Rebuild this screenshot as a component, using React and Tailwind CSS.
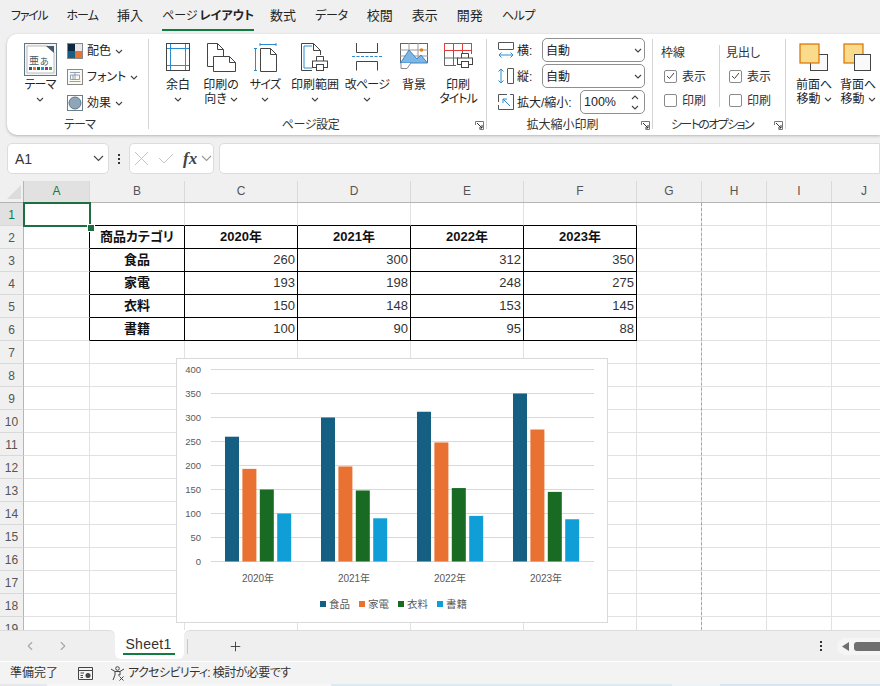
import { ChevronLeft, ChevronRight, Plus } from "lucide-react";

const menus = [
  { label: "ファイル", cls: "text-[12px] tracking-[-1.3px]" },
  { label: "ホーム", cls: "text-[12px] tracking-[-0.9px]" },
  { label: "挿入", cls: "" },
  { label: "ページレイアウト", cls: "" },
  { label: "数式", cls: "" },
  { label: "データ", cls: "text-[12px] tracking-[-0.3px]" },
  { label: "校閲", cls: "" },
  { label: "表示", cls: "" },
  { label: "開発", cls: "" },
  { label: "ヘルプ", cls: "text-[12px] tracking-[-0.3px]" },
];
const columns = [
  { name: "A", w: "w-[66px]" },
  { name: "B", w: "w-[95px]" },
  { name: "C", w: "w-[113px]" },
  { name: "D", w: "w-[113px]" },
  { name: "E", w: "w-[113px]" },
  { name: "F", w: "w-[113px]" },
  { name: "G", w: "w-[65px]" },
  { name: "H", w: "w-[65px]" },
  { name: "I", w: "w-[65px]" },
  { name: "J", w: "w-[65px]" },
];
const tableRows = {
  2: ["商品カテゴリ", "2020年", "2021年", "2022年", "2023年"],
  3: ["食品", 260, 300, 312, 350],
  4: ["家電", 193, 198, 248, 275],
  5: ["衣料", 150, 148, 153, 145],
  6: ["書籍", 100, 90, 95, 88],
};
const rows = Array.from({ length: 19 }, (_, i) => i + 1);

const Chev = ({ className = "" }) => (
  <svg width="8" height="5" viewBox="0 0 8 5" className={className}>
    <path d="M1 1 L4 4 L7 1" fill="none" stroke="#444" strokeWidth="1.1" />
  </svg>
);

const BigChev = ({ color = "#444", className = "" }) => (
  <svg width="11" height="7" viewBox="0 0 11 7" className={className}>
    <path d="M1 1 L5.5 5.5 L10 1" fill="none" stroke={color} strokeWidth="1.1" />
  </svg>
);

// kana runs wider here than in the reference font
const Kana = ({ children, t = "tracking-[-0.8px]" }) => <span className={t}>{children}</span>;

const Launcher = () => (
  <svg width="9" height="9" viewBox="0 0 9 9" className="absolute right-[2px] top-[5px]">
    <path d="M0.5 4 V0.5 H8.5 V8.5 H4.5" fill="none" stroke="#777" />
    <path d="M2 2 L7 7 M7 4 V7 H4" fill="none" stroke="#333" />
  </svg>
);

const Sep = () => <div className="w-px h-[90px] mt-[5px] bg-[#d4d4d4] shrink-0" />;

function Group({ w, label, launcher, children }) {
  return (
    <div className={`${w} shrink-0 flex flex-col pt-[5px]`}>
      <div className="h-[76px] flex">{children}</div>
      <div
        className={`relative h-[18px] leading-[18px] mt-px text-center text-[12px] text-[#333] whitespace-nowrap ${
          launcher ? "pr-[14px]" : "pl-[4px]"
        }`}
      >
        {label}
        {launcher && <Launcher />}
      </div>
    </div>
  );
}

function BigButton({ w, icon, lines, chev }) {
  return (
    <div className={`${w} shrink-0 flex flex-col items-center text-[12px] leading-[14px] text-[#242424]`}>
      <div className="h-[39px] pt-[4px] flex justify-center">{icon}</div>
      {lines.map((l, i) => (
        <div key={i} className="whitespace-nowrap">{l}</div>
      ))}
      {chev && (
        <div className="h-[14px] flex items-center">
          <Chev />
        </div>
      )}
    </div>
  );
}

const ThemeIcon = () => (
  <svg width="33" height="33" viewBox="0 0 33 33">
    <rect x="0.5" y="0.5" width="32" height="32" fill="#f3f3f3" stroke="#5f7687" />
    <path d="M3 3 H24 L30 9 V30 H3 Z" fill="#fff" stroke="#bbb" />
    <path d="M22 3 H30 V10 Z" fill="#44586a" />
    <text x="5" y="21" fontSize="10" fill="#44586a">亜</text>
    <text x="16" y="22" fontSize="9" fill="#44586a">あ</text>
    <rect x="5" y="24" width="3" height="3" fill="#156082" />
    <rect x="9" y="24" width="3" height="3" fill="#e97132" />
    <rect x="13" y="24" width="3" height="3" fill="#196b24" />
    <rect x="17" y="24" width="3" height="3" fill="#0f9ed5" />
    <rect x="21" y="24" width="3" height="3" fill="#a02b93" />
    <rect x="25" y="24" width="3" height="3" fill="#4ea72e" />
  </svg>
);
const ColorsIcon = () => (
  <svg width="16" height="16" viewBox="0 0 16 16">
    <rect width="8" height="8" fill="#0e2841" />
    <rect x="8" width="8" height="8" fill="#e8e8e8" />
    <rect y="8" width="8" height="8" fill="#156082" />
    <rect x="8" y="8" width="8" height="8" fill="#e97132" />
    <rect x="0.5" y="0.5" width="15" height="15" fill="none" stroke="#888" />
  </svg>
);
const FontsIcon = () => (
  <svg width="16" height="16" viewBox="0 0 16 16">
    <rect x="0.5" y="0.5" width="15" height="15" fill="#fbfaf2" stroke="#888" />
    <path d="M3 3.5 H13 M3.5 6 H12.5 V10.5 H3.5 Z M8 3.5 V10.5 M2.5 12.5 H13.5 M6 6 V10.5" fill="none" stroke="#7c8ba8" strokeWidth="0.8" />
  </svg>
);
const EffectsIcon = () => (
  <svg width="16" height="16" viewBox="0 0 16 16">
    <rect x="0.5" y="0.5" width="15" height="15" fill="#fff" stroke="#6a7f8e" />
    <circle cx="8" cy="8" r="6" fill="#8ea6b8" stroke="#5d7688" />
  </svg>
);
const MarginsIcon = () => (
  <svg width="24" height="28" viewBox="0 0 24 28">
    <path d="M4.5 1 V27 M19.5 1 V27 M1 5.5 H23 M1 22.5 H23" stroke="#2c8bd0" fill="none" />
    <rect x="0.5" y="0.5" width="23" height="27" fill="none" stroke="#444" />
  </svg>
);
const OrientationIcon = () => (
  <svg width="29" height="29" viewBox="0 0 29 29">
    <path d="M0.5 0.5 H10.5 L16.5 6.5 V13 M0.5 0.5 V23.5 H6 M10.5 0.5 V6.5 H16.5" fill="none" stroke="#444" />
    <path d="M6.5 13.5 H22.5 L28.5 19.5 V28.5 H6.5 Z" fill="#fff" stroke="#444" />
    <path d="M22.5 13.5 V19.5 H28.5" fill="none" stroke="#444" />
  </svg>
);
const SizeIcon = () => (
  <svg width="23" height="29" viewBox="0 0 23 29">
    <path d="M6 1.5 H22 M6 0 V3 M22 0 V3 M1.5 5 V28 M0 5.5 H3 M0 27.5 H3" fill="none" stroke="#2c8bd0" />
    <path d="M6.5 5.5 H16.5 L22.5 11.5 V28.5 H6.5 Z M16.5 5.5 V11.5 H22.5" fill="#fff" stroke="#444" />
  </svg>
);
const Printer = ({ x, y }) => (
  <g transform={`translate(${x} ${y})`}>
    <path d="M4.5 5 V0.5 H11.5 V5" fill="#fff" stroke="#444" />
    <rect x="0.5" y="5" width="15" height="6.5" fill="#fff" stroke="#444" />
    <rect x="4.5" y="8.5" width="7" height="6" fill="#fff" stroke="#444" />
  </g>
);
const PrintAreaIcon = () => (
  <svg width="28" height="29" viewBox="0 0 28 29">
    <path d="M0.5 0.5 H12.5 L19.5 7.5 V12 M0.5 0.5 V27.5 H11 M12.5 0.5 V7.5 H19.5" fill="none" stroke="#444" />
    <path d="M3 3 H11 M3 3 V25 H11" fill="none" stroke="#2c8bd0" />
    <Printer x={11} y={13} />
  </svg>
);
const BreakIcon = () => (
  <svg width="30" height="28" viewBox="0 0 30 28">
    <path d="M4.5 0 V9.5 H25.5 V0" fill="none" stroke="#444" />
    <path d="M0 13.5 H30" stroke="#2c8bd0" strokeDasharray="3 1.5" />
    <path d="M4.5 27.5 V18.5 H25.5 V27.5" fill="none" stroke="#444" />
  </svg>
);
const BackgroundIcon = () => (
  <svg width="28" height="26" viewBox="0 0 28 26">
    <rect x="0.5" y="0.5" width="27" height="19" fill="#fff" stroke="#666" />
    <path d="M9 0 V20 M18 0 V20 M0 7 H28 M0 13 H28" stroke="#999" />
    <path d="M0.5 20 L9 7 L17 16 L21 12 L27.5 20 Z" fill="#7db7e6" stroke="#3f86c4" />
    <circle cx="21.5" cy="7" r="1.8" fill="#e2800f" />
    <path d="M1 20 V25.5 H7 L11 20" fill="#fff" stroke="#888" />
  </svg>
);
const PrintTitleIcon = () => (
  <svg width="29" height="26" viewBox="0 0 29 26">
    <rect x="0.5" y="0.5" width="27" height="7" fill="#fff" stroke="#e43b3b" />
    <path d="M9.5 0.5 V7.5 M18.5 0.5 V7.5" stroke="#e43b3b" />
    <path d="M0.5 8 V22.5 H12 M9.5 8 V22 M0.5 15 H14 M18.5 8 V11 M27.5 8 V11" fill="none" stroke="#666" />
    <Printer x={13} y={10} />
  </svg>
);
const WidthIcon = () => (
  <svg width="16" height="16" viewBox="0 0 16 16">
    <path d="M0.5 7 V0.5 H15.5 V7 M0.5 7.5 H15.5" fill="none" stroke="#555" />
    <path d="M1 13 H15 M3.5 10.5 L1 13 L3.5 15.5 M12.5 10.5 L15 13 L12.5 15.5" fill="none" stroke="#2c8bd0" />
  </svg>
);
const HeightIcon = () => (
  <svg width="16" height="16" viewBox="0 0 16 16">
    <path d="M3 1 V15 M0.5 3.5 L3 1 L5.5 3.5 M0.5 12.5 L3 15 L5.5 12.5" fill="none" stroke="#2c8bd0" />
    <path d="M10 0.5 H15.5 V15.5 H10 M9.5 0.5 V15.5" fill="none" stroke="#555" />
  </svg>
);
const ScaleIcon = () => (
  <svg width="16" height="16" viewBox="0 0 16 16">
    <path d="M0.5 8 V0.5 H9 M12 0.5 H15.5 V15.5 H0.5 V11" fill="none" stroke="#555" />
    <path d="M12 12 L5 5 M5 9 V5 H9" fill="none" stroke="#2c8bd0" />
  </svg>
);
const FrontIcon = () => (
  <svg width="30" height="29" viewBox="0 0 30 29">
    <rect x="11.5" y="11.5" width="17" height="16" fill="#f9f9f9" stroke="#444" />
    <rect x="1" y="1" width="19" height="19" fill="#fadb8c" stroke="#d96f00" strokeWidth="1.2" />
  </svg>
);
const BackIcon = () => (
  <svg width="30" height="29" viewBox="0 0 30 29">
    <rect x="1" y="1" width="19" height="19" fill="#fadb8c" stroke="#d96f00" strokeWidth="1.2" />
    <rect x="11.5" y="11.5" width="16" height="16" fill="#f9f9f9" stroke="#444" />
  </svg>
);

function SmallTool({ icon, label }) {
  return (
    <div className="flex items-center h-[26px] text-[12px] text-[#242424]">
      {icon}
      <span className="ml-[4px]">{label}</span>
      <Chev className="ml-[4px]" />
    </div>
  );
}

function Select({ icon, label }) {
  return (
    <div className="flex items-center h-[24px]">
      {icon}
      <span className="ml-[3px] w-[25px] text-[12px] whitespace-nowrap pt-[2px]">{label}</span>
      <div className="w-[103px] h-[24px] border border-[#8f8f8f] rounded-[5px] flex items-center justify-between pl-[3px] pr-[2px] text-[12px] text-[#242424]">
        <span className="pt-[2px]">自動</span>
        <Chev />
      </div>
    </div>
  );
}

function Check({ checked, label }) {
  return (
    <div className="flex items-center h-[24px] pl-[3px] text-[12px] text-[#333]">
      <div className="w-[13px] h-[13px] border border-[#8a8a8a] rounded-[2px] flex items-center justify-center">
        {checked && (
          <svg width="9" height="8" viewBox="0 0 9 8">
            <path d="M1 4 L3.5 6.5 L8 1" fill="none" stroke="#444" />
          </svg>
        )}
      </div>
      <span className="ml-[5px] pt-[2px]">{label}</span>
    </div>
  );
}

function OptionColumn({ w, title }) {
  return (
    <div className={`${w} pt-[7px]`}>
      <div className="h-[14px] leading-[14px] text-[12px] text-[#333] mb-[4px]">{title}</div>
      <Check checked label="表示" />
      <Check label="印刷" />
    </div>
  );
}

function Ribbon() {
  return (
    <div className="ml-[7px] h-[101px] shrink-0 flex bg-white rounded-l-[10px] shadow-[0_1px_3px_rgba(0,0,0,0.25)] overflow-hidden">
      <Group w="w-[141px]" label={<Kana>テーマ</Kana>}>
        <div className="w-[60px]">
          <BigButton w="w-[66px]" icon={<ThemeIcon />} lines={[<Kana key="a">テーマ</Kana>]} chev />
        </div>
        <div className="-mt-px">
          <SmallTool icon={<ColorsIcon />} label="配色" />
          <SmallTool icon={<FontsIcon />} label="フォント" />
          <SmallTool icon={<EffectsIcon />} label="効果" />
        </div>
      </Group>
      <Sep />
      <Group w="w-[337px]" label={<Kana t="tracking-[-0.4px]">ページ設定</Kana>} launcher>
        <div className="pl-[9px] flex">
          <BigButton w="w-[40px]" icon={<MarginsIcon />} lines={["余白"]} chev />
          <BigButton
            w="w-[46px]"
            icon={<OrientationIcon />}
            lines={[
              "印刷の",
              <span key="a" className="inline-flex items-center gap-[3px]">向き<Chev /></span>,
            ]}
          />
          <BigButton w="w-[42px]" icon={<SizeIcon />} lines={[<Kana key="a">サイズ</Kana>]} chev />
          <BigButton w="w-[58px]" icon={<PrintAreaIcon />} lines={["印刷範囲"]} chev />
          <BigButton w="w-[46px]" icon={<BreakIcon />} lines={[<Kana key="a" t="tracking-[-0.7px]">改ページ</Kana>]} chev />
          <BigButton w="w-[48px]" icon={<BackgroundIcon />} lines={["背景"]} />
          <BigButton w="w-[40px]" icon={<PrintTitleIcon />} lines={["印刷", <Kana key="a" t="tracking-[-1px]">タイトル</Kana>]} />
        </div>
      </Group>
      <Sep />
      <Group w="w-[165px]" label="拡大縮小印刷" launcher>
        <div className="pl-[11px] flex flex-col gap-[2px] -mt-px">
          <Select icon={<WidthIcon />} label="横:" />
          <Select icon={<HeightIcon />} label="縦:" />
          <div className="flex items-center h-[24px]">
            <ScaleIcon />
            <span className="ml-[3px] w-[63px] text-[12px] whitespace-nowrap pt-[2px]">拡大/縮小:</span>
            <div className="w-[65px] h-[24px] border border-[#8f8f8f] rounded-[5px] flex items-center justify-between pl-[3px] pr-[5px] text-[12.5px] text-[#242424]">
              <span>100%</span>
              <div className="flex flex-col gap-[5px]">
                <Chev className="rotate-180" />
                <Chev />
              </div>
            </div>
          </div>
        </div>
      </Group>
      <Sep />
      <Group w="w-[132px]" label={<Kana t="tracking-[-1.6px]">シートのオプション</Kana>} launcher>
        <div className="pl-[8px] flex">
          <OptionColumn w="w-[58px]" title="枠線" />
          <div className="w-px h-[62px] mt-[6px] bg-[#d4d4d4] mr-[6px]" />
          <OptionColumn w="w-[58px]" title="見出し" />
        </div>
      </Group>
      <Sep />
      <div className="pl-[6px] pt-[5px] flex">
        <BigButton
          w="w-[44px]"
          icon={<FrontIcon />}
          lines={["前面へ", <span key="a" className="inline-flex items-center gap-[3px]">移動<Chev /></span>]}
        />
        <BigButton
          w="w-[44px]"
          icon={<BackIcon />}
          lines={["背面へ", <span key="a" className="inline-flex items-center gap-[3px]">移動<Chev /></span>]}
        />
      </div>
    </div>
  );
}

function Chart() {
  const data = [
    [260, 193, 150, 100],
    [300, 198, 148, 90],
    [312, 248, 153, 95],
    [350, 275, 145, 88],
  ];
  const colors = ["#156082", "#e97132", "#196b24", "#0f9ed5"];
  const legend = ["食品", "家電", "衣料", "書籍"];
  const zero = 203.5;
  return (
    <svg width="432" height="265" viewBox="0 0 432 265" className="absolute left-[176px] top-[177px] bg-white">
      <rect x="0.5" y="0.5" width="431" height="264" fill="#fff" stroke="#d9d9d9" />
      {[0, 50, 100, 150, 200, 250, 300, 350, 400].map((v) => {
        const y = zero - v * 0.48;
        return (
          <g key={v}>
            <line x1="35" x2="418" y1={y} y2={y} stroke="#d9d9d9" />
            <text x="25" y={y + 3.5} textAnchor="end" fontSize="9.5" fill="#595959">{v}</text>
          </g>
        );
      })}
      {data.map((set, i) =>
        set.map((v, j) => (
          <rect
            key={j}
            x={49 + i * 96 + j * 17.4}
            y={zero - v * 0.48}
            width="14"
            height={v * 0.48}
            fill={colors[j]}
          />
        ))
      )}
      {["2020年", "2021年", "2022年", "2023年"].map((t, i) => (
        <text key={t} x={82 + i * 96} y="224" textAnchor="middle" fontSize="10" fill="#595959">{t}</text>
      ))}
      {legend.map((t, i) => (
        <g key={t}>
          <rect x={144 + i * 39} y="243" width="6" height="6" fill={colors[i]} />
          <text x={153 + i * 39} y="250" fontSize="10.5" fill="#595959">{t}</text>
        </g>
      ))}
    </svg>
  );
}

function Cell({ row, colIndex, col }) {
  const data = tableRows[row];
  const value = data && colIndex >= 1 && colIndex <= 5 ? data[colIndex - 1] : null;
  const inTable = colIndex >= 1 && colIndex <= 5;
  const blackBottom = inTable && row >= 1 && row <= 6;
  const blackRight = colIndex <= 5 && row >= 2 && row <= 6;
  const isNum = typeof value === "number";
  return (
    <div
      className={`${col.w} shrink-0 h-[23px] border-r border-b flex items-center text-[13px] ${
        blackRight ? "border-r-black" : "border-r-[#e1e1e1]"
      } ${blackBottom ? "border-b-black" : "border-b-[#e1e1e1]"} ${
        isNum ? "justify-end pr-[2px] text-[#333]" : "justify-center font-bold text-[#111]"
      }`}
    >
      {value}
    </div>
  );
}

function Sheet() {
  return (
    <div className="relative mt-[7px] h-[449px] overflow-hidden bg-white shrink-0">
      <div className="flex h-[22px] bg-[#f0f0f0] border-b border-[#b5b5b5]">
        <div className="w-[24px] shrink-0 border-r border-[#b5b5b5] relative">
          <svg width="14" height="14" viewBox="0 0 14 14" className="absolute left-[7px] top-[4px]">
            <path d="M14 0 V14 H0 Z" fill="#dcdcdc" />
          </svg>
        </div>
        {columns.map((c, i) => (
          <div
            key={c.name}
            className={`${c.w} shrink-0 flex items-center justify-center pb-[2px] text-[12px] border-r border-[#d9d9d9] ${
              i === 0 ? "bg-[#e1e1e1] text-[#107c41]" : "text-[#555]"
            }`}
          >
            {c.name}
          </div>
        ))}
      </div>
      {rows.map((r) => (
        <div key={r} className="flex">
          <div
            className={`w-[24px] shrink-0 h-[23px] flex items-center justify-center pt-[2px] text-[12px] border-r border-r-[#b5b5b5] border-b border-b-[#d9d9d9] ${
              r === 1 ? "bg-[#e1e1e1] text-[#107c41]" : "bg-[#f0f0f0] text-[#555]"
            }`}
          >
            {r}
          </div>
          {columns.map((c, i) => (
            <Cell key={c.name} row={r} colIndex={i} col={c} />
          ))}
        </div>
      ))}
      <div className="absolute left-[701px] top-[22px] bottom-0 border-l border-dashed border-[#a6a6a6]" />
      <div className="absolute left-[23px] top-[21px] w-[68px] h-[25px] border-2 border-[#1d6f42]" />
      <div className="absolute left-[87px] top-[43px] w-[6px] h-[6px] bg-[#1d6f42] border border-white box-content" />
      <Chart />
    </div>
  );
}

export default function App() {
  return (
    <div className="w-[880px] h-[686px] overflow-hidden flex flex-col bg-[#f0f0f0] text-[#242424] [font-family:'Liberation_Sans','Noto_Sans_CJK_JP',sans-serif] [font-feature-settings:'palt']">
      <div className="h-[34px] shrink-0 flex pl-[11px] gap-[19px] text-[13px]">
        {menus.map((m) =>
          m.label === "ページレイアウト" ? (
            <div key={m.label} className="relative h-[31px] -mr-[3px] flex items-center whitespace-nowrap text-[12px]">
              ページ <span className="font-bold ml-[2px]">レイアウト</span>
              <div className="absolute left-0 right-0 bottom-0 h-[2px] bg-[#107c41]" />
            </div>
          ) : (
            <div key={m.label} className={`h-[31px] flex items-center whitespace-nowrap ${m.cls}`}>{m.label}</div>
          )
        )}
      </div>
      <Ribbon />
      <div className="mt-[8px] h-[31px] shrink-0 flex items-center pl-[7px]">
        <div className="w-[102px] h-[31px] bg-white border border-[#dcdcdc] rounded-[5px] flex items-center justify-between pl-[7px] pr-[4px] text-[14px] text-[#333]">
          <span className="pt-[2px]">A1</span>
          <BigChev />
        </div>
        <div className="w-[20px] flex flex-col items-center gap-[2px]">
          <div className="w-[2px] h-[2px] bg-[#333]" />
          <div className="w-[2px] h-[2px] bg-[#333]" />
          <div className="w-[2px] h-[2px] bg-[#333]" />
        </div>
        <div className="w-[85px] h-[31px] bg-white border border-[#dcdcdc] rounded-[5px] flex items-center pl-[5px]">
          <svg width="13" height="13" viewBox="0 0 13 13">
            <path d="M0 0 L13 13 M13 0 L0 13" stroke="#c4c4c4" />
          </svg>
          <svg width="16" height="11" viewBox="0 0 16 11" className="ml-[10px]">
            <path d="M1 5 L6 10 L15 1" fill="none" stroke="#c4c4c4" />
          </svg>
          <span className="[font-family:'Liberation_Serif',serif] italic font-bold text-[17px] text-[#444] ml-[9px]">fx</span>
          <BigChev color="#999" className="ml-[4px]" />
        </div>
        <div className="ml-[5px] flex-1 h-[31px] bg-white border border-[#dcdcdc] rounded-l-[5px]" />
      </div>
      <Sheet />
      <div className="h-[31px] shrink-0 flex bg-white">
        <div className="w-[115px] shrink-0 bg-[#efefef] rounded-tr-[6px] flex items-center pl-[23px] gap-[19px] text-[#a8a8a8] border-t border-[#dcdcdc]">
          <ChevronLeft size={14} />
          <ChevronRight size={14} />
        </div>
        <div className="w-[69px] shrink-0 bg-[#efefef]">
          <div className="h-[29px] bg-white rounded-b-[6px] flex flex-col items-center pt-[5px] pr-[2px]">
            <span className="text-[14px] leading-[18px] text-[#333] tracking-[0.3px]">Sheet1</span>
            <div className="w-[52px] h-[2px] bg-[#107c41]" />
          </div>
        </div>
        <div className="flex-1 bg-[#efefef] rounded-tl-[6px] border-t border-[#dcdcdc] flex items-center">
          <div className="w-px h-[15px] ml-[3px] bg-[#c8c8c8]" />
          <Plus size={15} strokeWidth={1.4} className="ml-[40px] text-[#333]" />
          <div className="ml-[577px] flex flex-col gap-[2px]">
            <div className="w-[2px] h-[2px] bg-[#333]" />
            <div className="w-[2px] h-[2px] bg-[#333]" />
            <div className="w-[2px] h-[2px] bg-[#333]" />
          </div>
          <div className="ml-[15px] flex-1 h-[17px] bg-[#f5f5f5] rounded-l-full flex items-center pl-[5px]">
            <svg width="7" height="9" viewBox="0 0 7 9">
              <path d="M7 0 V9 L0 4.5 Z" fill="#6f6f6f" />
            </svg>
            <div className="ml-[5px] flex-1 h-[9px] bg-[#6f6f6f] rounded-l-[3px]" />
          </div>
        </div>
      </div>
      <div className="h-px shrink-0 bg-white" />
      <div className="h-[22px] shrink-0 bg-[#f3f3f3] flex items-center pl-[10px] text-[12px] text-[#333]">
        <span>準備完了</span>
        <svg width="15" height="13" viewBox="0 0 15 13" className="ml-[20px]">
          <path d="M0.5 0.5 H14.5 V12.5 H0.5 Z M0.5 3.5 H14.5" fill="none" stroke="#444" />
          <circle cx="10" cy="8.5" r="2.5" fill="#444" />
          <path d="M2.5 6 H6 M2.5 8.5 H5 M2.5 10.5 H5" stroke="#444" />
        </svg>
        <svg width="15" height="15" viewBox="0 0 15 15" className="ml-[17px]">
          <circle cx="7.5" cy="2.5" r="1.8" fill="none" stroke="#444" />
          <path d="M1 3 L5 5.5 H10 L14 3 M5 5.5 V9 L3 14 M10 5.5 V9 H8" fill="none" stroke="#444" />
          <path d="M9.5 10.5 L13.5 14.5 M13.5 10.5 L9.5 14.5" stroke="#444" />
        </svg>
        <span className="ml-[3px] tracking-[-0.6px]">アクセシビリティ: 検討が必要です</span>
      </div>
      <div className="h-[2px] shrink-0 flex">
        <div className="w-[47px] bg-[#e8e8e8]" />
        <div className="w-[284px] bg-[#f7f7f7]" />
        <div className="w-[341px] bg-[#deeaf2]" />
        <div className="w-[48px] bg-[#eef3f6]" />
        <div className="flex-1 bg-[#d8e4ee]" />
      </div>
    </div>
  );
}
